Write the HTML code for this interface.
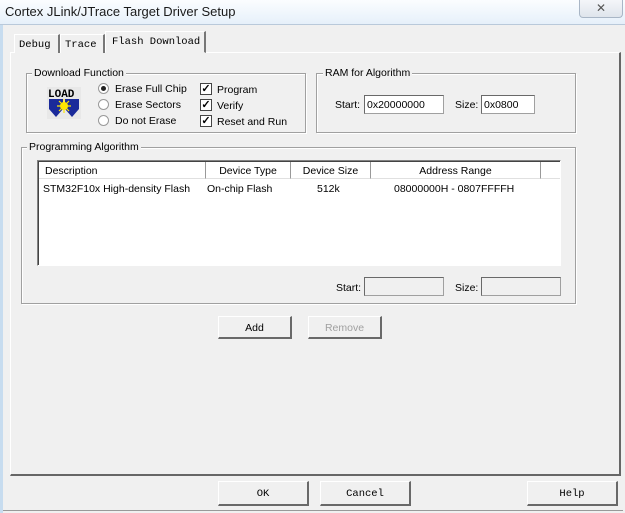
<!DOCTYPE html>
<html><head><meta charset="utf-8"><style>
*{box-sizing:border-box;margin:0;padding:0}
body{width:625px;height:513px;overflow:hidden;background:#f0f0f0;font-family:"Liberation Sans",sans-serif;font-size:10.5px;color:#000;position:relative}
.a{position:absolute;white-space:nowrap}
.title{left:0;top:0;width:625px;height:25px;background:linear-gradient(#fbfdff,#e6f0fa);border-bottom:1px solid #b9c9da}
.title span{position:absolute;left:5px;top:4px;font-size:13px;color:#1a1a1a}
.close{left:579px;top:0;width:44px;height:18px;border:1px solid #a9b6c6;border-top:none;border-radius:0 0 4px 4px;background:linear-gradient(#f4f6f9,#dfe5ec);text-align:center;color:#555;font-size:12px;line-height:16px}
.side{left:0;top:25px;width:3px;height:488px;background:#c7dcef}
.panel{left:10px;top:52px;width:611px;height:424px;border:1px solid #fff;border-right:2px solid #666;border-bottom:2px solid #666;background:#f0f0f0}
.tab{top:34px;height:19px;border:1px solid #fff;border-right:2px solid #777;border-bottom:none;font-family:"Liberation Mono",monospace;font-size:10.5px;padding:4px 0 0 4px;background:#f0f0f0}
.grp{border:1px solid #a0a0a0;box-shadow:1px 1px 0 #fff inset, 1px 1px 0 #fff}
.gl{background:#f0f0f0;padding:0 2px;font-size:10.5px}
.inp{background:#fff;border:1px solid #a0a0a0;border-left-color:#696969;border-top-color:#696969;height:19px;padding:3px 0 0 2px}
.dis{background:#f0f0f0}
.btn{border:1px solid #fff;border-right:2px solid #696969;border-bottom:2px solid #696969;text-align:center;background:#f0f0f0}
.radio{width:11px;height:11px;border-radius:50%;border:1px solid #999;background:#fff}
.chk{width:12px;height:12px;border:1px solid #444;background:#fff;font-size:11px;line-height:10px;text-align:center;font-weight:bold}
.hd{top:162px;height:17px;border-right:1px solid #999;padding-top:3px;background:#fff;border-bottom:1px solid #e0e0e0}
.mono{font-family:"Liberation Mono",monospace;font-size:10.5px}
</style></head><body>
<div class="a title"><span>Cortex JLink/JTrace Target Driver Setup</span></div>
<div class="a close">✕</div>
<div class="a side"></div>

<div class="a panel"></div>
<div class="a tab" style="left:14px;width:46px">Debug</div>
<div class="a tab" style="left:60px;width:45px">Trace</div>
<div class="a tab" style="left:105px;width:101px;top:31px;height:22px;border-bottom:1px solid #f0f0f0;z-index:2;padding-left:6px">Flash Download</div>

<div class="a grp" style="left:26px;top:73px;width:280px;height:60px"></div>
<div class="a gl" style="left:32px;top:67px">Download Function</div>
<svg class="a" style="left:47px;top:87px" width="34" height="32" viewBox="0 0 34 32">
<rect width="34" height="32" fill="#e8e8e8"/>
<text x="1" y="10" font-family="Liberation Mono,monospace" font-weight="bold" font-size="11" fill="#000">LOAD</text>
<path d="M2 12h14v10l-7 8-7-8z M18 12h14v10l-7 8-7-8z" fill="#1a2a9a"/>
<circle cx="17" cy="19" r="4" fill="#ffe600"/>
<path d="M17 12v14M10 19h14M12 14l10 10M22 14l-10 10" stroke="#ffe600" stroke-width="1.2"/>
</svg>
<div class="a radio" style="left:98px;top:83px"><div style="width:5px;height:5px;background:#222;border-radius:50%;margin:2px"></div></div>
<div class="a" style="left:115px;top:83px">Erase Full Chip</div>
<div class="a radio" style="left:98px;top:99px"></div>
<div class="a" style="left:115px;top:99px">Erase Sectors</div>
<div class="a radio" style="left:98px;top:115px"></div>
<div class="a" style="left:115px;top:115px">Do not Erase</div>
<div class="a chk" style="left:200px;top:83px">✓</div>
<div class="a" style="left:217px;top:84px">Program</div>
<div class="a chk" style="left:200px;top:99px">✓</div>
<div class="a" style="left:217px;top:100px">Verify</div>
<div class="a chk" style="left:200px;top:115px">✓</div>
<div class="a" style="left:217px;top:116px">Reset and Run</div>

<div class="a grp" style="left:316px;top:73px;width:260px;height:60px"></div>
<div class="a gl" style="left:323px;top:67px">RAM for Algorithm</div>
<div class="a" style="left:335px;top:99px">Start:</div>
<div class="a inp" style="left:364px;top:95px;width:80px">0x20000000</div>
<div class="a" style="left:455px;top:99px">Size:</div>
<div class="a inp" style="left:481px;top:95px;width:54px">0x0800</div>

<div class="a grp" style="left:21px;top:147px;width:555px;height:157px"></div>
<div class="a gl" style="left:27px;top:141px">Programming Algorithm</div>
<div class="a" style="left:37px;top:160px;width:524px;height:106px;background:#fff;border:1px solid #828282;border-right-color:#fff;border-bottom-color:#fff;box-shadow:inset 1px 1px 0 #444"></div>
<div class="a hd" style="left:39px;width:167px;padding-left:6px">Description</div>
<div class="a hd" style="left:206px;width:85px;text-align:center">Device Type</div>
<div class="a hd" style="left:291px;width:80px;text-align:center">Device Size</div>
<div class="a hd" style="left:371px;width:170px;text-align:center">Address Range</div>
<div class="a hd" style="left:541px;width:19px;border-right:none"></div>
<div class="a" style="left:43px;top:183px">STM32F10x High-density Flash</div>
<div class="a" style="left:207px;top:183px">On-chip Flash</div>
<div class="a" style="left:317px;top:183px">512k</div>
<div class="a" style="left:394px;top:183px">08000000H - 0807FFFFH</div>

<div class="a" style="left:336px;top:282px">Start:</div>
<div class="a inp dis" style="left:364px;top:277px;width:80px"></div>
<div class="a" style="left:455px;top:282px">Size:</div>
<div class="a inp dis" style="left:481px;top:277px;width:80px"></div>

<div class="a btn" style="left:218px;top:316px;width:74px;height:23px;padding-top:5px">Add</div>
<div class="a btn" style="left:308px;top:316px;width:74px;height:23px;padding-top:5px;color:#a0a0a0">Remove</div>

<div class="a btn mono" style="left:218px;top:481px;width:91px;height:25px;padding-top:6px">OK</div>
<div class="a btn mono" style="left:320px;top:481px;width:91px;height:25px;padding-top:6px">Cancel</div>
<div class="a btn mono" style="left:527px;top:481px;width:91px;height:25px;padding-top:6px">Help</div>
<div class="a" style="left:3px;top:510px;width:620px;height:1px;background:#999"></div>
</body></html>
